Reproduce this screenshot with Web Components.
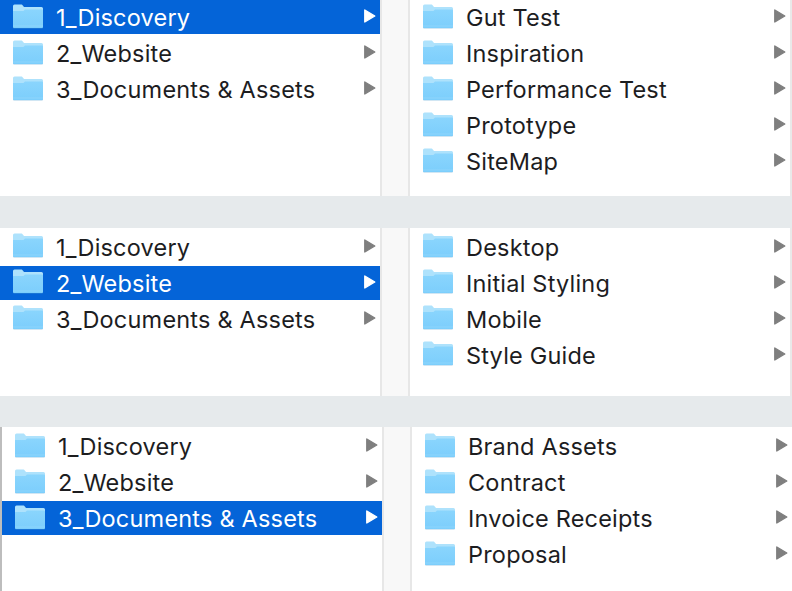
<!DOCTYPE html>
<html>
<head>
<meta charset="utf-8">
<title>Folders</title>
<style>
    html, body {
        margin: 0;
        height: 591px;
        overflow: hidden;
        background-color: #e6eaec;
    }
</style>
</head>
<body>
<finder-stack>
    <finder-panel height="196" flush edge>
        <finder-column slot="left">
            <finder-row selected>1_Discovery</finder-row>
            <finder-row>2_Website</finder-row>
            <finder-row>3_Documents &amp; Assets</finder-row>
        </finder-column>
        <finder-column slot="right">
            <finder-row>Gut Test</finder-row>
            <finder-row>Inspiration</finder-row>
            <finder-row>Performance Test</finder-row>
            <finder-row>Prototype</finder-row>
            <finder-row>SiteMap</finder-row>
        </finder-column>
    </finder-panel>
    <finder-panel height="168" edge>
        <finder-column slot="left">
            <finder-row>1_Discovery</finder-row>
            <finder-row selected>2_Website</finder-row>
            <finder-row>3_Documents &amp; Assets</finder-row>
        </finder-column>
        <finder-column slot="right">
            <finder-row>Desktop</finder-row>
            <finder-row>Initial Styling</finder-row>
            <finder-row>Mobile</finder-row>
            <finder-row>Style Guide</finder-row>
        </finder-column>
    </finder-panel>
    <finder-panel height="164" bar>
        <finder-column slot="left">
            <finder-row>1_Discovery</finder-row>
            <finder-row>2_Website</finder-row>
            <finder-row selected>3_Documents &amp; Assets</finder-row>
        </finder-column>
        <finder-column slot="right">
            <finder-row>Brand Assets</finder-row>
            <finder-row>Contract</finder-row>
            <finder-row>Invoice Receipts</finder-row>
            <finder-row>Proposal</finder-row>
        </finder-column>
    </finder-panel>
</finder-stack>

<script>
class FinderStack extends HTMLElement {
    constructor() {
        super();
        this.attachShadow({mode: 'open'});
        this.shadowRoot.innerHTML = `
            <style>
                :host {
                    display: flex;
                    flex-direction: column;
                    justify-content: space-between;
                    height: 591px;
                    font-family: Inter, "Liberation Sans", sans-serif;
                    font-size: 23.5px;
                    color: #1d1d1f;
                }
            </style>
            <slot></slot>
        `;
    }
}

class FinderPanel extends HTMLElement {
    constructor() {
        super();
        this.attachShadow({mode: 'open'});
        this.shadowRoot.innerHTML = `
            <style>
                :host {
                    display: flex;
                    overflow: hidden;
                    background-color: #fff;
                    --col-top: 2px;
                }
                /* top panel is cropped right at its first row */
                :host([flush]) {
                    --col-top: 0px;
                }
                :host([bar]) {
                    border-left: 2px solid #bdbdbd;
                }
                :host([edge]) {
                    border-right: 2px solid #e9e9e9;
                }
                .column {
                    width: 380px;
                    flex: none;
                }
                .gutter {
                    width: 26px;
                    flex: none;
                    background-color: #f8f8f8;
                    border-left: 2px solid #e7e7e7;
                    border-right: 2px solid #e7e7e7;
                }
            </style>
            <div class="column"><slot name="left"></slot></div>
            <div class="gutter"></div>
            <div class="column"><slot name="right"></slot></div>
        `;
    }

    connectedCallback() {
        this.style.height = this.getAttribute("height") + "px";
    }
}

class FinderColumn extends HTMLElement {
    constructor() {
        super();
        this.attachShadow({mode: 'open'});
        this.shadowRoot.innerHTML = `
            <style>
                :host {
                    display: flex;
                    flex-direction: column;
                    gap: 2px;
                    padding-top: var(--col-top);
                }
            </style>
            <slot></slot>
        `;
    }
}

class FinderRow extends HTMLElement {
    constructor() {
        super();
        this.attachShadow({mode: 'open'});
        this.shadowRoot.innerHTML = `
            <style>
                :host {
                    display: flex;
                    align-items: center;
                    height: 34px;
                    padding: 0 4px 0 13px;
                    white-space: nowrap;
                    letter-spacing: 0.2px;
                }
                :host([selected]) {
                    background-color: #0464d8;
                    color: #fff;
                }
                svg {
                    margin-bottom: 2px;
                }
                .label {
                    flex: 1;
                    margin-left: 13px;
                }
                .arrow {
                    fill: #7f7f7f;
                    stroke: #7f7f7f;
                }
                :host([selected]) .arrow {
                    fill: #fff;
                    stroke: #fff;
                }
            </style>
            <svg width="30" height="25" viewBox="0 0 30 25">
                <defs>
                    <linearGradient id="body" x1="0" y1="0" x2="0" y2="1">
                        <stop offset="0" stop-color="#8ad5fd"/>
                        <stop offset="1" stop-color="#7ccefc"/>
                    </linearGradient>
                </defs>
                <path d="M1 24.5h28a1 1 0 0 0 1-1V6a1 1 0 0 0-1-1H1a1 1 0 0 0-1 1v17.5a1 1 0 0 0 1 1z" fill="#5aa6d6" opacity="0.55"/>
                <path d="M0 5.5V2a1.5 1.5 0 0 1 1.5-1.5H8c1 0 1.4.5 2 1.3l1 1.2h17.5A1.5 1.5 0 0 1 30 4.5v3H0z" fill="#aee2fc"/>
                <path d="M0 7h10.5l1.5-1.5h17a1 1 0 0 1 1 1V23a1 1 0 0 1-1 1H1a1 1 0 0 1-1-1z" fill="url(#body)"/>
                <rect y="21.5" width="30" height="1" fill="#9bdcfd" opacity="0.6"/>
            </svg>
            <span class="label" style="padding-top: 1px"><slot></slot></span>
            <svg width="12" height="14" viewBox="0 0 12 14"><path class="arrow" d="M.8 1l10 6-10 6z" stroke-width="1.4" stroke-linejoin="round"/></svg>
        `;
    }
}

customElements.define("finder-stack", FinderStack);
customElements.define("finder-panel", FinderPanel);
customElements.define("finder-column", FinderColumn);
customElements.define("finder-row", FinderRow);
</script>
</body>
</html>
